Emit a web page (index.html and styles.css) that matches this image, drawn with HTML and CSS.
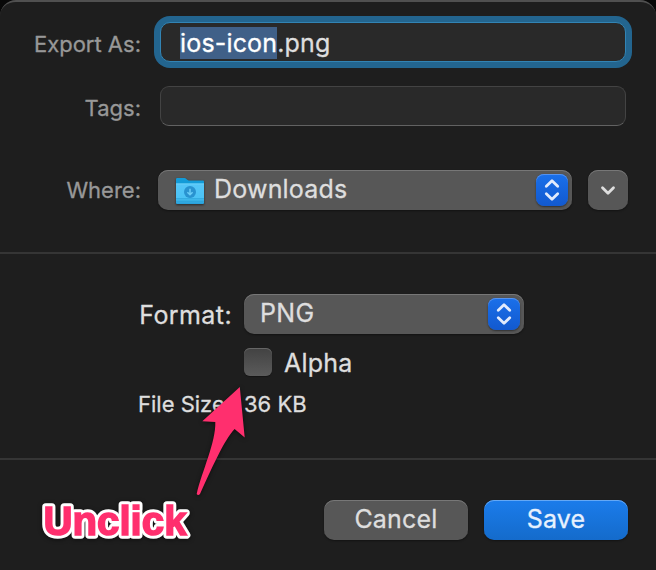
FILE: index.html
```html
<!DOCTYPE html>
<html lang="en">
<head>
<meta charset="utf-8">
<title>Export</title>
<link rel="stylesheet" href="styles.css">
</head>
<body>
<main class="sheet">
  <section class="destination">
    <div class="row name-row">
      <label class="label export-label">Export As:</label>
      <div class="field focused"><span class="filename"><mark>ios-icon</mark>.png</span></div>
    </div>
    <div class="row tags-row">
      <label class="label tags-label">Tags:</label>
      <div class="field"></div>
    </div>
    <div class="row where-row">
      <label class="label where-label">Where:</label>
      <div class="popup where-popup">
        <svg class="folder" width="30" height="28" viewBox="0 0 30 28">
          <defs><linearGradient id="f" x1="0" y1="0" x2="0" y2="1"><stop offset="0" stop-color="#55c6f8"/><stop offset=".7" stop-color="#4cc3f5"/><stop offset="1" stop-color="#279fd9"/></linearGradient></defs>
          <path d="M1 2.2Q1 1 2.2 1H9.5Q10.5 1 11.4 1.9L12.3 2.8Q13 3.4 14 3.4H28Q29 3.4 29 4.4V12H1Z" fill="#139bd8"/>
          <path d="M1 7H29V26Q29 27 28 27H2Q1 27 1 26Z" fill="url(#f)"/>
          <path d="M1 6.8H29" stroke="#83dcff" stroke-width=".8"/>
          <path d="M1 21.7H29M1 24.3H29" stroke="#2ba2d8" stroke-width=".8"/>
          <circle cx="15" cy="15" r="6" fill="#2993d0"/>
          <path d="M15 11.8V17.4M12.4 15.2L15 17.8L17.6 15.2" fill="none" stroke="#6bcdf7" stroke-width="1.5"/>
        </svg>
        <span class="downloads">Downloads</span>
        <span class="stepper"><svg width="32" height="32" viewBox="0 0 32 32"><path d="M10.3 12.2L16 6.7L21.7 12.2M10.3 19.8L16 25.3L21.7 19.8"/></svg></span>
      </div>
      <div class="disclosure"><svg width="40" height="40" viewBox="0 0 40 40"><path d="M14.5 17.8L20 23.3L25.5 17.8"/></svg></div>
    </div>
  </section>
  <section class="options">
    <div class="row format-row">
      <label class="format-label">Format:</label>
      <div class="popup format-popup"><span class="png">PNG</span>
        <span class="stepper"><svg width="32" height="32" viewBox="0 0 32 32"><path d="M10.3 12.2L16 6.7L21.7 12.2M10.3 19.8L16 25.3L21.7 19.8"/></svg></span>
      </div>
    </div>
    <div class="row alpha-row"><span class="checkbox"></span><span class="alpha">Alpha</span></div>
    <div class="row size-row"><span class="size-label">File Size:</span><span class="size-value">36 KB</span></div>
  </section>
  <footer class="actions">
    <div class="button"><span class="cancel">Cancel</span></div>
    <div class="button primary"><span class="save">Save</span></div>
  </footer>
  <svg class="annotation" width="656" height="570" viewBox="0 0 656 570">
    <defs><text id="note" x="43.5" y="534.7" textLength="143" lengthAdjust="spacingAndGlyphs">Unclick</text></defs>
    <path d="M239.8 387L244.7 437.5L234.6 429C224 440 211 470 200 494Q198 496 196.7 494C202 471 216 442 215.3 422L202.3 421.2Z"/>
    <use href="#note" class="note-outline"/>
    <use href="#note" class="note-fill"/>
  </svg>
</main>
</body>
</html>
```
FILE: styles.css
```css
* { box-sizing: border-box; }
html { background: #080808; }
body { margin: 0; width: 656px; height: 570px; overflow: hidden; background: #080808; font-family: Inter, "Liberation Sans", sans-serif; font-size: 25px; line-height: 40px; color: #dedede; white-space: nowrap; -webkit-text-stroke: .3px currentColor; }
.sheet { position: relative; height: 570px; background: #1e1e1e; border-top: 2px solid #505050; border-radius: 16px 16px 0 0; }
.row { display: flex; align-items: center; height: 40px; }
.destination { height: 252px; padding-top: 20px; border-bottom: 2px solid #353535; }
.label { width: 141px; margin-right: 19px; padding-top: 2px; text-align: right; font-size: 22px; color: #989898; }
.export-label, .tags-label { padding-top: 4px; }
.where-label { margin-right: 17px; padding-top: 0; }
.field { width: 466px; height: 40px; border: 1px solid #434343; border-bottom-color: #626262; border-radius: 9px; background: #292929; }
.focused { padding-left: 19px; border-color: #3284b4; box-shadow: 0 0 0 6px #23658f; border-radius: 10px; }
.filename { display: flex; align-items: center; height: 40px; letter-spacing: .17px; }
.filename mark { display: block; height: 32px; line-height: 32px; background: #406088; color: #fff; }
.tags-row { margin-top: 24px; }
.where-row { margin-top: 44px; }
.popup, .disclosure, .button { display: flex; align-items: center; height: 40px; border-radius: 10px; background: #575757; box-shadow: inset 0 1px #777, 0 1px 2px #0006; }
.where-popup { width: 414px; padding: 0 4px 0 17px; }
.folder { flex: none; margin-top: 1px; filter: drop-shadow(0 1px 1px #0008); }
.downloads { margin-left: 9px; line-height: 38px; height: 40px; letter-spacing: .2px; }
.stepper { display: block; width: 32px; height: 32px; margin-left: auto; border-radius: 8px; background: linear-gradient(#1a70ea, #1259cf); box-shadow: inset 0 1px #5793ee, 0 1px 2px #0007; }
.stepper svg, .disclosure svg { display: block; fill: none; stroke: #e2ebfc; stroke-width: 2.8; stroke-linecap: round; stroke-linejoin: round; }
.disclosure { width: 40px; margin-left: 16px; }
.disclosure svg { stroke: #dedede; }
.options { height: 206px; padding-top: 40px; border-bottom: 2px solid #353535; }
.format-label { width: 232px; margin-right: 12px; padding-top: 2px; text-align: right; letter-spacing: .4px; }
.format-popup { width: 280px; padding: 0 4px 0 16px; }
.png { line-height: 38px; height: 40px; letter-spacing: .3px; }
.alpha-row { margin-top: 8px; padding-left: 244px; }
.checkbox { width: 28px; height: 28px; border-radius: 6px; background: linear-gradient(#424242, #5b5b5b); box-shadow: inset 0 1px #666, 0 1px 1px #0005; }
.alpha { margin-left: 12px; padding-top: 2px; letter-spacing: .2px; }
.size-row { font-size: 22px; margin-top: 2px; }
.size-label { width: 232px; padding-left: 138px; }
.size-value { margin-left: 12px; }
.actions { display: flex; gap: 16px; padding: 40px 28px 0 324px; }
.button { width: 144px; justify-content: center; line-height: 38px; padding-bottom: 2px; letter-spacing: .2px; }
.primary { background: linear-gradient(#1b7ceb, #146bcb); box-shadow: inset 0 1px #64a8f5, 0 1px 2px #0006; color: #e7f1fe; }
.annotation { position: absolute; left: 0; top: -2px; fill: #ff2f6e; filter: drop-shadow(0 1px 2px #0008); }
.annotation text { font: bold 41px "Liberation Sans", Arial, sans-serif; -webkit-text-stroke: 0; stroke: inherit; stroke-width: inherit; }
.note-outline { stroke: #fff; stroke-width: 7.5px; stroke-linejoin: round; }
.note-fill { stroke: #ff2f6e; stroke-width: 1.6px; }
```
